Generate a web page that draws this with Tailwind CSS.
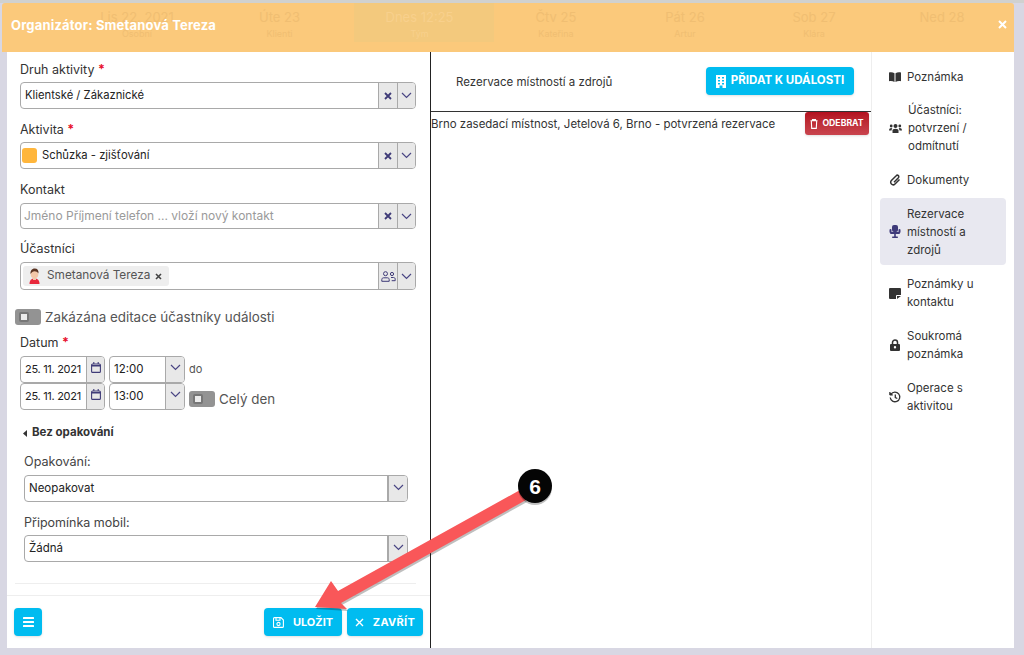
<!doctype html>
<html lang="cs">
<head>
<meta charset="utf-8">
<title>Organizátor</title>
<script src="https://cdn.jsdelivr.net/npm/@tailwindcss/browser@4"></script>
</head>
<body class="m-0">
<div class="relative w-[1024px] h-[655px] overflow-hidden bg-[#d8d7e3] font-['Inter','Liberation_Sans',sans-serif] text-[#333]">
  <div class="h-[3px] bg-[#d0d1cf]"></div>
  <!-- modal -->
  <div class="absolute left-[2px] top-[3px] w-[1012px] h-[645px] flex flex-col">
    <!-- header -->
    <div class="relative h-[49px] shrink-0 bg-[#fbc97b] overflow-hidden rounded-t-[3px]">
      <div class="absolute left-[352px] top-0 w-[140px] h-[39px] bg-[#f3c97d]"></div>
      <div class="absolute inset-x-0 top-[4px] flex text-[#f0be72] text-center">
        <div class="w-[60px]"></div>
        <div class="w-[150px] text-[13px] leading-[20px]">Lis 22, 2021<div class="text-[9px] leading-[14px]">Osobní</div></div>
        <div class="w-[135px] text-[13px] leading-[20px]">Úte 23<div class="text-[9px] leading-[14px]">Klienti</div></div>
        <div class="w-[145px] text-[13px] leading-[20px] text-[#f8d08c]">Dnes 12:25<div class="text-[9px] leading-[14px]">Tým</div></div>
        <div class="w-[128px] text-[13px] leading-[20px]">Čtv 25<div class="text-[9px] leading-[14px]">Kateřina</div></div>
        <div class="w-[130px] text-[13px] leading-[20px]">Pát 26<div class="text-[9px] leading-[14px]">Artur</div></div>
        <div class="w-[128px] text-[13px] leading-[20px]">Sob 27<div class="text-[9px] leading-[14px]">Klára</div></div>
        <div class="w-[128px] text-[13px] leading-[20px]">Ned 28</div>
      </div>
      <div class="absolute left-0 right-0 top-0 h-full flex items-center justify-between pl-[9px] pr-[7px]">
        <span class="text-[13px] font-bold text-white tracking-[0.17px] -mt-[4px]">Organizátor: Smetanová Tereza</span>
        <svg class="-mt-[6px]" width="9" height="9" viewBox="0 0 9 9"><path d="M1 1l7 7M8 1l-7 7" stroke="#fff" stroke-width="2"/></svg>
      </div>
    </div>
    <!-- body -->
    <div class="flex-1 flex min-h-0">
      <div class="w-[5px] bg-[#d8d7e3] shrink-0"></div>
      <div class="flex-1 flex bg-white min-w-0">
        <!-- left form -->
        <div class="w-[423px] shrink-0 flex flex-col border-r border-[#222] box-content">
          <div class="flex-1 pl-[13px] pr-[14px] pt-[8px] text-[12px]">
            <div class="h-[22px] leading-[20px] text-[12.5px] text-[#333]">Druh aktivity <span class="text-[#e8112d] font-bold">*</span></div>
            <div class="h-[27px] flex border border-[#a9a9a9] rounded-[4px] bg-white overflow-hidden">
              <div class="flex-1 flex items-center pl-[4px] text-[#222] text-[11.25px]">Klientské / Zákaznické</div>
              <div class="w-[19px] flex items-center justify-center bg-[#e8e8e8] border-l border-[#a9a9a9]"><svg width="8" height="8" viewBox="0 0 8 8"><path d="M1 1l6 6M7 1L1 7" stroke="#3f3b78" stroke-width="1.8"/></svg></div>
              <div class="w-[18px] flex items-center justify-center bg-[#e8e8e8] border-l border-[#a9a9a9]"><svg width="11" height="7" viewBox="0 0 11 7"><path d="M1 1l4.500 4.500L10 1" fill="none" stroke="#4a4684" stroke-width="1.200"/></svg></div>
            </div>

            <div class="mt-[11px] h-[22px] leading-[20px] text-[12.5px]">Aktivita <span class="text-[#e8112d] font-bold">*</span></div>
            <div class="h-[27px] flex border border-[#a9a9a9] rounded-[4px] bg-white overflow-hidden">
              <div class="flex-1 flex items-center pl-[1px] text-[#222] text-[11.25px]"><span class="w-[15px] h-[15px] rounded-[3px] bg-[#ffb63c] mr-[5px]"></span>Schůzka - zjišťování</div>
              <div class="w-[19px] flex items-center justify-center bg-[#e8e8e8] border-l border-[#a9a9a9]"><svg width="8" height="8" viewBox="0 0 8 8"><path d="M1 1l6 6M7 1L1 7" stroke="#3f3b78" stroke-width="1.8"/></svg></div>
              <div class="w-[18px] flex items-center justify-center bg-[#e8e8e8] border-l border-[#a9a9a9]"><svg width="11" height="7" viewBox="0 0 11 7"><path d="M1 1l4.500 4.500L10 1" fill="none" stroke="#4a4684" stroke-width="1.200"/></svg></div>
            </div>

            <div class="mt-[12px] h-[22px] leading-[18px] text-[12.5px]">Kontakt</div>
            <div class="h-[26px] flex border border-[#a9a9a9] rounded-[4px] bg-white overflow-hidden">
              <div class="flex-1 flex items-center pl-[3px] text-[#9a9a9a] text-[12px]">Jméno Příjmení telefon ... vloží nový kontakt</div>
              <div class="w-[19px] flex items-center justify-center bg-[#e8e8e8] border-l border-[#a9a9a9]"><svg width="8" height="8" viewBox="0 0 8 8"><path d="M1 1l6 6M7 1L1 7" stroke="#3f3b78" stroke-width="1.8"/></svg></div>
              <div class="w-[18px] flex items-center justify-center bg-[#e8e8e8] border-l border-[#a9a9a9]"><svg width="11" height="7" viewBox="0 0 11 7"><path d="M1 1l4.500 4.500L10 1" fill="none" stroke="#4a4684" stroke-width="1.200"/></svg></div>
            </div>

            <div class="mt-[10px] h-[23px] leading-[20px] text-[12.5px]">Účastníci</div>
            <div class="h-[28px] flex border border-[#a9a9a9] rounded-[4px] bg-white overflow-hidden">
              <div class="flex-1 flex items-center pl-[2px]">
                <div class="h-[20px] w-[146px] flex items-center bg-[#eeeeee] rounded-[3px] pl-[4px] text-[#555] text-[11.8px]">
                  <svg class="mr-[5px] shrink-0" width="15" height="18" viewBox="0 0 15 18"><path d="M2.500 17c0-4 2-5.500 5-5.500s5 1.500 5 5.500z" fill="#e8283c"/><circle cx="7.500" cy="7.500" r="3.800" fill="#f3c7a8"/><path d="M3.500 7c-.3-4 2-5.500 4.300-5.500 2.500 0 4 1.800 3.700 5-1-1.500-2.500-2.300-4-2.300-1.500.2-3 1-4 2.800z" fill="#5a3322"/><rect x="6" y="10.500" width="3" height="2.500" fill="#f3c7a8"/></svg>
                  <span>Smetanová Tereza</span>
                  <svg class="ml-[5px]" width="7" height="7" viewBox="0 0 7 7"><path d="M1 1l5 5M6 1L1 6" stroke="#444" stroke-width="1.600"/></svg>
                </div>
              </div>
              <div class="w-[19px] flex items-center justify-center bg-[#e8e8e8] border-l border-[#a9a9a9]"><svg width="15" height="11" viewBox="0 0 15 11" fill="none" stroke="#3f3b78" stroke-width="1"><circle cx="4.500" cy="2.700" r="2"/><path d="M.8 10.300V8.500c0-1 .8-1.700 1.700-1.700h4c1 0 1.700.7 1.700 1.700v1.800z"/><circle cx="11" cy="3" r="1.600"/><path d="M10 6.500h2.500c1 0 1.700.7 1.700 1.700v1.500h-3.500"/></svg></div>
              <div class="w-[18px] flex items-center justify-center bg-[#e8e8e8] border-l border-[#a9a9a9]"><svg width="11" height="7" viewBox="0 0 11 7"><path d="M1 1l4.500 4.500L10 1" fill="none" stroke="#4a4684" stroke-width="1.200"/></svg></div>
            </div>

            <div class="mt-[19px] h-[16px] -ml-[5px] flex items-center">
              <span class="w-[26px] h-[16px] bg-[#939393] rounded-[3px] flex items-center pl-[4px] mr-[4px]"><span class="w-[10px] h-[10px] rounded-[2px] border-2 border-[#777] bg-[#ececec]"></span></span>
              <span class="text-[13.4px] text-[#555]">Zakázána editace účastníky události</span>
            </div>

            <div class="mt-[8px] h-[23px] leading-[20px] text-[12.5px]">Datum <span class="text-[#e8112d] font-bold">*</span></div>
            <div class="flex items-center h-[27px]">
              <div class="w-[85px] h-[27px] flex border border-[#a9a9a9] rounded-[4px] overflow-hidden"><div class="flex-1 flex items-center pl-[4px] text-[11px] tracking-[-0.3px] whitespace-nowrap text-[#222]">25. 11. 2021</div><div class="w-[18px] bg-[#e8e8e8] border-l border-[#a9a9a9] flex justify-center pt-[5px]"><svg width="10" height="11" viewBox="0 0 10 11" fill="none" stroke="#3f3b78" stroke-width="1.100"><rect x=".6" y="2" width="8.800" height="8.400" rx="1"/><path d="M.6 3.800h8.800" stroke-width="1.500"/><path d="M2.800 0v2M7.200 0v2"/></svg></div></div>
              <div class="ml-[4px] w-[76px] h-[27px] flex border border-[#a9a9a9] rounded-[4px] overflow-hidden"><div class="flex-1 flex items-center pl-[4px] text-[11.5px] text-[#222]">12:00</div><div class="w-[19px] bg-[#e8e8e8] border-l border-[#a9a9a9] flex justify-center pt-[7px]"><svg width="11" height="7" viewBox="0 0 11 7"><path d="M1 1l4.500 4.500L10 1" fill="none" stroke="#4a4684" stroke-width="1.200"/></svg></div></div>
              <span class="ml-[4px] text-[11px] text-[#555]">do</span>
            </div>
            <div class="flex items-center h-[27px]">
              <div class="w-[85px] h-[27px] flex border border-[#a9a9a9] rounded-[4px] overflow-hidden"><div class="flex-1 flex items-center pl-[4px] text-[11px] tracking-[-0.3px] whitespace-nowrap text-[#222]">25. 11. 2021</div><div class="w-[18px] bg-[#e8e8e8] border-l border-[#a9a9a9] flex justify-center pt-[5px]"><svg width="10" height="11" viewBox="0 0 10 11" fill="none" stroke="#3f3b78" stroke-width="1.100"><rect x=".6" y="2" width="8.800" height="8.400" rx="1"/><path d="M.6 3.800h8.800" stroke-width="1.500"/><path d="M2.800 0v2M7.200 0v2"/></svg></div></div>
              <div class="ml-[4px] w-[76px] h-[27px] flex border border-[#a9a9a9] rounded-[4px] overflow-hidden"><div class="flex-1 flex items-center pl-[4px] text-[11.5px] text-[#222]">13:00</div><div class="w-[19px] bg-[#e8e8e8] border-l border-[#a9a9a9] flex justify-center pt-[7px]"><svg width="11" height="7" viewBox="0 0 11 7"><path d="M1 1l4.500 4.500L10 1" fill="none" stroke="#4a4684" stroke-width="1.200"/></svg></div></div>
              <span class="ml-[4px] mt-[5px] w-[26px] h-[16px] bg-[#939393] rounded-[3px] flex items-center pl-[4px] mr-[4px]"><span class="w-[10px] h-[10px] rounded-[2px] border-2 border-[#777] bg-[#ececec]"></span></span>
              <span class="mt-[5px] text-[13.4px] text-[#555]">Celý den</span>
            </div>

            <div class="mt-[15px] h-[16px] flex items-center text-[11.5px] font-bold text-[#333] pl-[3px]">
              <svg class="mr-[5px]" width="4" height="7" viewBox="0 0 4 7"><path d="M4 0v7L0 3.500z" fill="#333"/></svg>Bez opakování
            </div>

            <div class="pl-[4px] pr-[8px]">
              <div class="mt-[11px] h-[23px] leading-[20px] text-[12.6px] text-[#444]">Opakování:</div>
              <div class="h-[27px] flex border border-[#a9a9a9] rounded-[4px] overflow-hidden"><div class="flex-1 flex items-center pl-[4px] text-[11.5px] text-[#222]">Neopakovat</div><div class="w-[20px] bg-[#e8e8e8] border-l-2 border-[#a9a9a9] flex justify-center pt-[8px]"><svg width="11" height="7" viewBox="0 0 11 7"><path d="M1 1l4.500 4.500L10 1" fill="none" stroke="#4a4684" stroke-width="1.200"/></svg></div></div>
              <div class="mt-[11px] h-[22px] leading-[20px] text-[12.5px] text-[#444]">Připomínka mobil:</div>
              <div class="h-[27px] flex border border-[#a9a9a9] rounded-[4px] overflow-hidden"><div class="flex-1 flex items-center pl-[4px] text-[11.5px] text-[#222]">Žádná</div><div class="w-[20px] bg-[#e8e8e8] border-l-2 border-[#a9a9a9] flex justify-center pt-[8px]"><svg width="11" height="7" viewBox="0 0 11 7"><path d="M1 1l4.500 4.500L10 1" fill="none" stroke="#4a4684" stroke-width="1.200"/></svg></div></div>
            </div>
            <div class="mt-[21px] -ml-[5px] h-px bg-[#eeeeee]"></div>
          </div>
          <!-- footer -->
          <div class="h-[53px] shrink-0 border-t border-[#eeeeee] flex items-start justify-between pt-[12px] pl-[7px] pr-[7px]">
            <div class="w-[28px] h-[28px] bg-[#00bcf0] rounded-[4px] shadow-sm flex items-center justify-center"><svg width="11" height="10" viewBox="0 0 11 10" fill="#fff"><rect width="11" height="2" rx=".5"/><rect y="4" width="11" height="2" rx=".5"/><rect y="8" width="11" height="2" rx=".5"/></svg></div>
            <div class="flex gap-[5px]">
              <div class="w-[78px] h-[28px] bg-[#00bcf0] rounded-[4px] shadow-sm flex items-center justify-center text-white text-[11px] font-bold gap-[9px]"><svg width="11" height="11" viewBox="0 0 11 11" fill="none" stroke="#fff" stroke-width="1.100"><path d="M1.500.6h6.500l2.400 2.400v6.400a1 1 0 0 1-1 1h-7.900a1 1 0 0 1-1-1V1.600a1 1 0 0 1 1-1z"/><path d="M3 .8v2.400h4V.8"/><circle cx="5.500" cy="7" r="1.600"/></svg>ULOŽIT</div>
              <div class="w-[76px] h-[28px] bg-[#00bcf0] rounded-[4px] shadow-sm flex items-center justify-center text-white text-[11px] font-bold tracking-[0.3px] gap-[9px]"><svg width="9" height="9" viewBox="0 0 9 9"><path d="M1 1l7 7M8 1L1 8" stroke="#fff" stroke-width="1.400"/></svg>ZAVŘÍT</div>
            </div>
          </div>
        </div>

        <!-- center panel -->
        <div class="w-[440px] shrink-0">
          <div class="h-[60px] border-b border-[#333] flex items-center justify-between pl-[25px] pr-[17px]">
            <span class="text-[11.5px] text-[#333] mt-[2px]">Rezervace místností a zdrojů</span>
            <div class="w-[148px] h-[28px] -mt-[1px] bg-[#00bcf0] rounded-[4px] shadow-sm flex items-center justify-center gap-[5px] text-white text-[11.5px] font-bold"><svg width="10" height="13" viewBox="0 0 10 13" fill="#fff"><path d="M0 0h10v13H6.500v-2.500h-3V13H0zM2 2v1.500h2V2zm4 0v1.500h2V2zM2 5v1.500h2V5zm4 0v1.500h2V5zM2 8v1.500h2V8zm4 0v1.500h2V8z" fill-rule="evenodd"/></svg>PŘIDAT K UDÁLOSTI</div>
          </div>
          <div class="flex justify-between pr-[2px] h-[24px]">
            <span class="text-[11.46px] text-[#333] leading-[24px]">Brno zasedací místnost, Jetelová 6, Brno - potvrzená rezervace</span>
            <div class="w-[64px] h-[23px] rounded-[3px] bg-gradient-to-b from-[#b30f1f] to-[#c9444e] shadow-sm flex items-center justify-center gap-[4px] text-white text-[8.7px] font-bold"><svg width="8" height="10" viewBox="0 0 8 10" fill="none" stroke="#fff" stroke-width="1.100"><path d="M.5 1.800h7M2.500 1.800V.6h3v1.200M1.300 1.800l.4 7.600h4.600l.4-7.600"/></svg>ODEBRAT</div>
          </div>
        </div>

        <!-- sidebar -->
        <div class="flex-1 border-l border-[#eeeeee] pl-[8px] pr-[8px] pt-[8px] text-[11.5px] leading-[18px] text-[#333]">
          <div class="h-[33px] flex items-center gap-[6px] pl-[9px]">
            <svg class="shrink-0" width="12" height="10" viewBox="0 0 12 10" fill="#333"><path d="M0 .5C2 0 4 .2 5.500 1.300V10C4 9 2 8.800 0 9.200zM12 .5C10 0 8 .2 6.500 1.300V10C8 9 10 8.800 12 9.200z"/></svg>
            <span>Poznámka</span>
          </div>
          <div class="h-[70px] flex items-center gap-[6px] pl-[9px]">
            <svg class="shrink-0" width="13" height="10" viewBox="0 0 13 10" fill="#333"><circle cx="6.500" cy="3" r="2"/><path d="M3.500 10V7.500c0-1 1-1.800 3-1.800s3 .8 3 1.800V10z"/><circle cx="2.200" cy="3" r="1.400"/><circle cx="10.800" cy="3" r="1.400"/><path d="M0 7.500C0 5.800 1 5 2.300 5l1 .4C2.800 6 2.500 6.800 2.500 7.500zM13 7.500c0-1.700-1-2.500-2.300-2.500l-1 .4c.5.600.8 1.400.8 2.100z"/></svg>
            <span>Účastníci:<br>potvrzení /<br>odmítnutí</span>
          </div>
          <div class="h-[34px] flex items-center gap-[6px] pl-[9px]">
            <svg class="shrink-0" width="12" height="12" viewBox="0 0 12 12" fill="none" stroke="#333" stroke-width="1.500"><path d="M10.500 5.500L6 10a2.400 2.400 0 0 1-3.600-3.500l4.800-4.800a1.500 1.500 0 0 1 2.200 2.100L5 8.200"/></svg>
            <span>Dokumenty</span>
          </div>
          <div class="mt-[1px] mb-[2px] h-[67px] flex items-center gap-[6px] pl-[9px] bg-[#e8e8f0] rounded-[4px]">
            <svg class="shrink-0" width="12" height="13" viewBox="0 0 12 13" fill="#3e3a7a"><rect x="3" y="0" width="6" height="7" rx="2"/><rect x="0.500" y="4" width="2" height="4" rx="1"/><rect x="9.500" y="4" width="2" height="4" rx="1"/><rect x="1" y="7" width="10" height="2" rx="1"/><rect x="5.200" y="9" width="1.600" height="3"/><rect x="3" y="11.500" width="6" height="1.500" rx=".7"/></svg>
            <span>Rezervace<br>místností a<br>zdrojů</span>
          </div>
          <div class="h-[52px] flex items-center gap-[6px] pl-[9px]">
            <svg class="shrink-0" width="12" height="11" viewBox="0 0 12 11" fill="#333"><path d="M0 1a1 1 0 0 1 1-1h10a1 1 0 0 1 1 1v6H8a1 1 0 0 0-1 1v3H1a1 1 0 0 1-1-1zM8 11V8h4z"/></svg>
            <span>Poznámky u<br>kontaktu</span>
          </div>
          <div class="h-[52px] flex items-center gap-[6px] pl-[9px]">
            <svg class="shrink-0" width="12" height="12" viewBox="0 0 12 12"><path d="M3.500 5.500V3.500a2.500 2.500 0 0 1 5 0v2" fill="none" stroke="#333" stroke-width="1.500"/><path fill-rule="evenodd" d="M2 5h8a1 1 0 0 1 1 1v5a1 1 0 0 1-1 1H2a1 1 0 0 1-1-1V6a1 1 0 0 1 1-1zm4 2a1.200 1.200 0 1 0 0 2.400A1.200 1.200 0 0 0 6 7z" fill="#333"/></svg>
            <span>Soukromá<br>poznámka</span>
          </div>
          <div class="h-[52px] flex items-center gap-[6px] pl-[9px]">
            <svg class="shrink-0" width="12" height="12" viewBox="0 0 12 12" fill="none" stroke="#333" stroke-width="1.300"><path d="M2 3.200A4.800 4.800 0 1 1 1.200 6.500"/><path d="M.8 1v3h3" fill="#333" stroke-width="1"/><path d="M6.300 3.500v3l2 1"/></svg>
            <span>Operace s<br>aktivitou</span>
          </div>
        </div>
      </div>
    </div>
  </div>

  <!-- annotation arrow -->
  <svg class="absolute left-0 top-0 pointer-events-none" width="1024" height="655" viewBox="0 0 1024 655">
    <path d="M315 607L331 581 338 591 520 490 526 500 341 603 347 609z" fill="#000" opacity=".25" transform="translate(1 2)"/>
    <path d="M315 607L331 581 338 591 520 490 526 500 341 603 347 609z" fill="#f95759"/>
    <circle cx="535" cy="488" r="17" fill="#000" opacity=".25"/>
    <circle cx="535" cy="486" r="17" fill="#050505"/>
    <text x="535" y="494" text-anchor="middle" font-family="Liberation Sans, sans-serif" font-size="21" font-weight="700" fill="#fff">6</text>
  </svg>
</div>
</body>
</html>
